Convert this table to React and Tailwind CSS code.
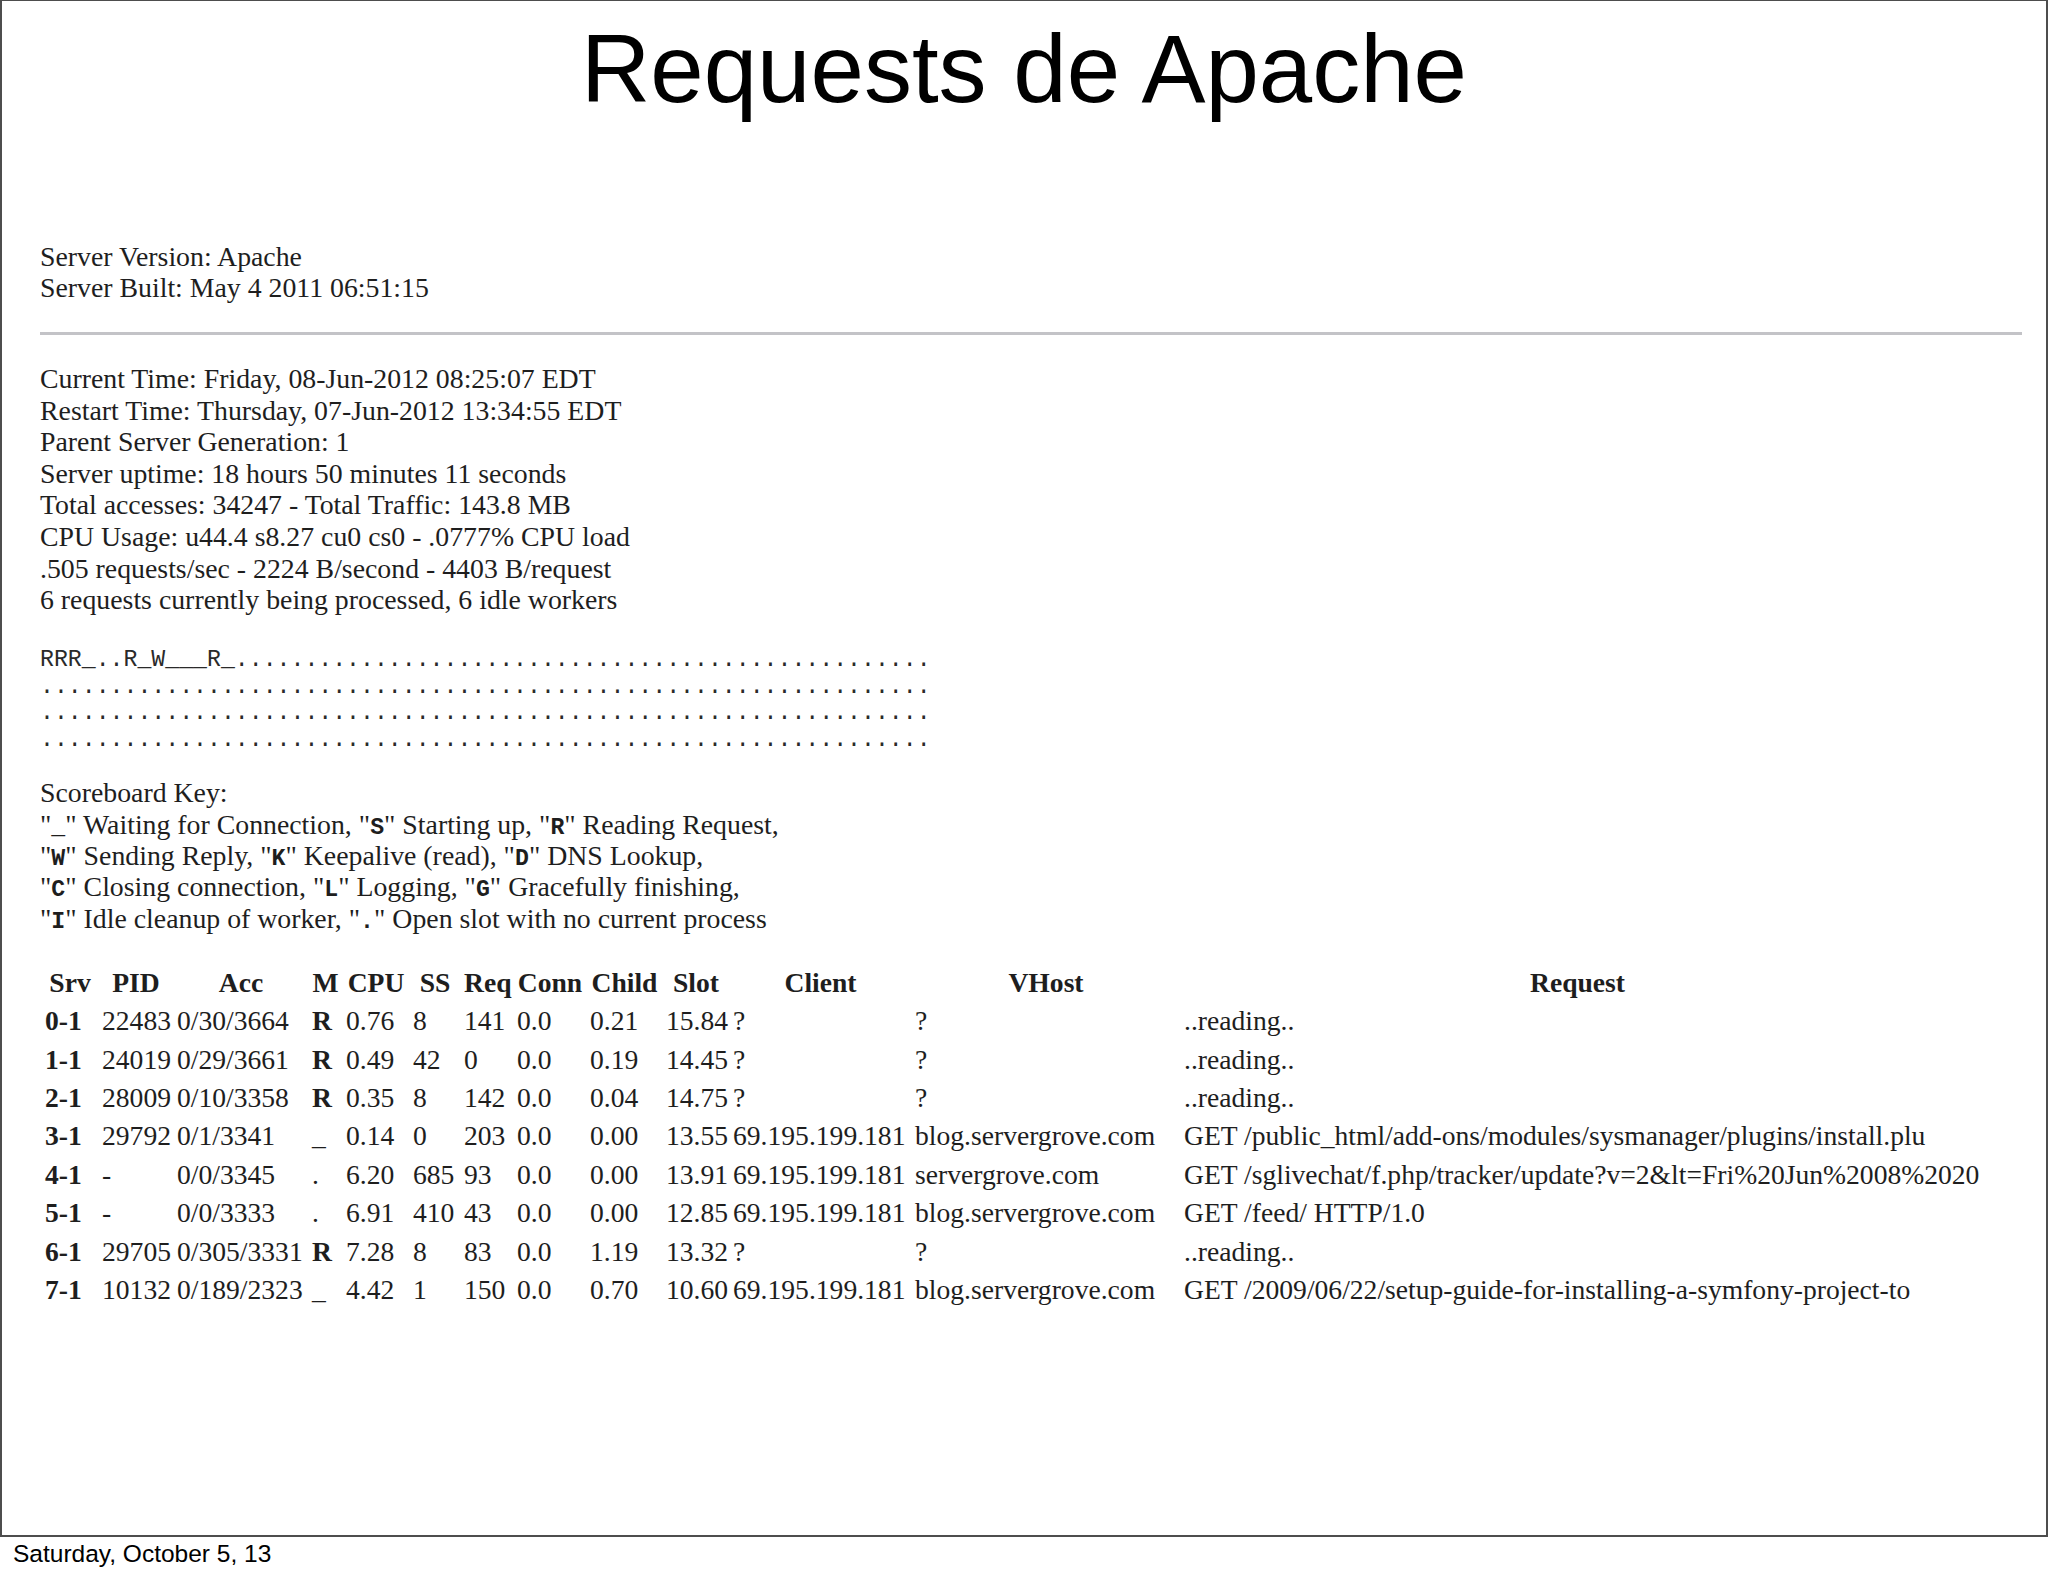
import React from 'react';

const serif = "font-['Liberation_Serif','Times_New_Roman',serif]";
const mono = "font-['Liberation_Mono','Courier_New',monospace]";

const info1 = ['Server Version: Apache', 'Server Built: May 4 2011 06:51:15'];

const info2 = [
  'Current Time: Friday, 08-Jun-2012 08:25:07 EDT',
  'Restart Time: Thursday, 07-Jun-2012 13:34:55 EDT',
  'Parent Server Generation: 1',
  'Server uptime: 18 hours 50 minutes 11 seconds',
  'Total accesses: 34247 - Total Traffic: 143.8 MB',
  'CPU Usage: u44.4 s8.27 cu0 cs0 - .0777% CPU load',
  '.505 requests/sec - 2224 B/second - 4403 B/request',
  '6 requests currently being processed, 6 idle workers',
];

const dots = (n) => '.'.repeat(n);
const scoreboard = [
  'RRR_..R_W___R_' + dots(50),
  dots(64),
  dots(64),
  dots(64),
];

// scoreboard key, each entry is [code, label]
const keyLines = [
  [['_', ' Waiting for Connection, '], ['S', ' Starting up, '], ['R', ' Reading Request,']],
  [['W', ' Sending Reply, '], ['K', ' Keepalive (read), '], ['D', ' DNS Lookup,']],
  [['C', ' Closing connection, '], ['L', ' Logging, '], ['G', ' Gracefully finishing,']],
  [['I', ' Idle cleanup of worker, '], ['.', ' Open slot with no current process']],
];

const headers = ['Srv', 'PID', 'Acc', 'M', 'CPU', 'SS', 'Req', 'Conn', 'Child', 'Slot', 'Client', 'VHost', 'Request'];

const rows = [
  ['0-1', '22483', '0/30/3664', 'R', '0.76', '8', '141', '0.0', '0.21', '15.84', '?', '?', '..reading..'],
  ['1-1', '24019', '0/29/3661', 'R', '0.49', '42', '0', '0.0', '0.19', '14.45', '?', '?', '..reading..'],
  ['2-1', '28009', '0/10/3358', 'R', '0.35', '8', '142', '0.0', '0.04', '14.75', '?', '?', '..reading..'],
  ['3-1', '29792', '0/1/3341', '_', '0.14', '0', '203', '0.0', '0.00', '13.55', '69.195.199.181', 'blog.servergrove.com', 'GET /public_html/add-ons/modules/sysmanager/plugins/install.plu'],
  ['4-1', '-', '0/0/3345', '.', '6.20', '685', '93', '0.0', '0.00', '13.91', '69.195.199.181', 'servergrove.com', 'GET /sglivechat/f.php/tracker/update?v=2&lt=Fri%20Jun%2008%2020'],
  ['5-1', '-', '0/0/3333', '.', '6.91', '410', '43', '0.0', '0.00', '12.85', '69.195.199.181', 'blog.servergrove.com', 'GET /feed/ HTTP/1.0'],
  ['6-1', '29705', '0/305/3331', 'R', '7.28', '8', '83', '0.0', '1.19', '13.32', '?', '?', '..reading..'],
  ['7-1', '10132', '0/189/2323', '_', '4.42', '1', '150', '0.0', '0.70', '10.60', '69.195.199.181', 'blog.servergrove.com', 'GET /2009/06/22/setup-guide-for-installing-a-symfony-project-to'],
];

const cols = 'grid grid-cols-[57px_75px_135px_34px_67px_51px_53px_73px_76px_67px_182px_269px_794px]';

function Line({ children }) {
  return <div className="whitespace-nowrap">{children}</div>;
}

export default function App() {
  return (
    <div className="w-[2048px] h-[1576px] bg-white flex flex-col">
      {/* slide */}
      <div className="h-[1537px] border-t border-l-2 border-r-2 border-b-2 border-[#4d4d4d] flex flex-col">
        <h1 className="mt-[20px] text-center text-[96px] leading-[95px] text-black font-['Liberation_Sans',Arial,sans-serif]">
          Requests de Apache
        </h1>

        <div className={`pl-[38px] pr-[24px] flex flex-col text-[#1e1e1e] ${serif}`}>
          <div className="mt-[125px] text-[27.8px] leading-[31.3px]">
            {info1.map((t) => <Line key={t}>{t}</Line>)}
          </div>

          <div className="mt-[28px] h-[3px] bg-[#c3c3c7]" />

          <div className="mt-[28.5px] text-[27.8px] leading-[31.6px]">
            {info2.map((t) => <Line key={t}>{t}</Line>)}
          </div>

          <pre className={`mt-[31.5px] text-[23.2px] leading-[26.5px] text-[#2a2a2a] ${mono}`}>
            {scoreboard.join('\n')}
          </pre>

          <div className="mt-[24px] text-[27.8px] leading-[31.3px]">
            <Line>Scoreboard Key:</Line>
            {keyLines.map((parts, i) => (
              <Line key={i}>
                {parts.map(([code, label]) => (
                  <span key={code}>
                    "<b className={`text-[23.2px] leading-none ${mono}`}>{code}</b>"{label}
                  </span>
                ))}
              </Line>
            ))}
          </div>

          <div className="mt-[30px] ml-[5px] text-[27.6px] leading-[38.4px]">
            <div className={cols}>
              {headers.map((h) => (
                <div key={h} className="pr-[7px] text-center font-bold whitespace-nowrap">{h}</div>
              ))}
            </div>
            {rows.map((r) => (
              <div key={r[0]} className={cols}>
                {r.map((c, i) => (
                  <div
                    key={i}
                    className={`pr-[7px] whitespace-nowrap ${i === 0 || (i === 3 && c === 'R') ? 'font-bold' : ''}`}
                  >
                    {c}
                  </div>
                ))}
              </div>
            ))}
          </div>
        </div>
      </div>

      <div className="pl-[13px] pt-[3px] text-[24.5px] leading-[27px] text-black font-['Liberation_Sans',Arial,sans-serif]">
        Saturday, October 5, 13
      </div>
    </div>
  );
}
